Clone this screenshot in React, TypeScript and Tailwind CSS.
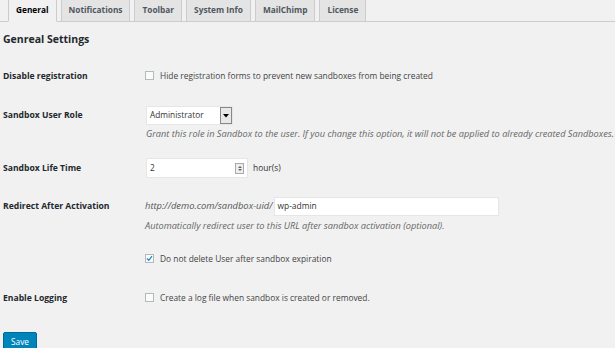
import React from "react";

const font = { fontFamily: '"Open Sans", "Noto Sans", sans-serif' };

function Checkbox({ checked }: { checked?: boolean }) {
  return (
    <span className="inline-flex w-[9px] h-[9px] border border-[#b4b9be] bg-[#fbfbfb] items-center justify-center shrink-0">
      {checked && (
        <svg width="7" height="7" viewBox="0 0 7 7">
          <path d="M1 3.5 L2.8 5.3 L6 1.2" stroke="#1e8cbe" strokeWidth="1.3" fill="none" />
        </svg>
      )}
    </span>
  );
}

export default function App() {
  const tabs = ["General", "Notifications", "Toolbar", "System Info", "MailChimp", "License"];
  return (
    <div className="w-[615px] h-[348px] bg-[#f1f1f1] overflow-hidden text-[#23282d]" style={font}>
      <div className="flex gap-[4px] pl-[8px] h-[22px] border-b border-[#cccccc] items-end">
        {tabs.map((t, i) => (
          <div
            key={t}
            className={
              "h-[22px] px-[7px] flex items-center text-[8.3px] font-bold border border-[#cccccc] " +
              (i === 0 ? "bg-[#f1f1f1] border-b-[#f1f1f1] text-[#000] -mb-px h-[23px]" : "bg-[#e4e4e4] border-b-0 text-[#50575e]")
            }
          >
            {t}
          </div>
        ))}
      </div>
      <div className="pl-[3px]">
        <div className="mt-[10px] text-[10.5px] font-bold leading-[14px]">Genreal Settings</div>

        <div className="mt-[20px] flex items-center h-[20px]">
          <div className="w-[142px] text-[8.6px] font-bold">Disable registration</div>
          <div className="flex items-center gap-[6px] text-[8.4px] text-[#444]">
            <Checkbox />
            <span>Hide registration forms to prevent new sandboxes from being created</span>
          </div>
        </div>

        <div className="mt-[20px] flex items-center h-[19px]">
          <div className="w-[143px] text-[8.6px] font-bold">Sandbox User Role</div>
          <div className="w-[87px] h-[19px] bg-white border border-[#e6e6e6] flex items-center justify-between text-[8.3px] text-[#333]">
            <span className="pl-[3px]">Administrator</span>
            <span className="w-[12px] h-[17px] border border-[#888] bg-[#e8e8e8] flex items-center justify-center">
              <svg width="6" height="4" viewBox="0 0 6 4"><path d="M0 0 H6 L3 3.5 Z" fill="#000" /></svg>
            </span>
          </div>
        </div>
        <div className="mt-[4px] pl-[143px] text-[9.2px] italic text-[#666] leading-[10px] whitespace-nowrap">
          Grant this role in Sandbox to the user. If you change this option, it will not be applied to already created Sandboxes.
        </div>

        <div className="mt-[19px] flex items-center h-[20px]">
          <div className="w-[143px] text-[8.6px] font-bold">Sandbox Life Time</div>
          <div className="w-[102px] h-[20px] bg-white border border-[#e6e6e6] flex items-center justify-between text-[8.3px] text-[#333]">
            <span className="pl-[3px]">2</span>
            <span className="w-[9px] h-[11px] mr-[3px] border border-[#aaa] bg-[#eee] flex flex-col items-center justify-center gap-[1px]">
              <svg width="4" height="2" viewBox="0 0 4 2"><path d="M0 2 H4 L2 0 Z" fill="#666" /></svg>
              <svg width="4" height="2" viewBox="0 0 4 2"><path d="M0 0 H4 L2 2 Z" fill="#666" /></svg>
            </span>
          </div>
          <span className="ml-[5px] text-[8.4px] text-[#333]">hour(s)</span>
        </div>

        <div className="mt-[19px] flex items-center h-[19px]">
          <div className="w-[142px] text-[8.6px] font-bold">Redirect After Activation</div>
          <span className="text-[9.4px] italic text-[#555]">http://demo.com/sandbox-uid/</span>
          <div className="ml-[1px] w-[225px] h-[19px] bg-white border border-[#e6e6e6] flex items-center text-[8.4px] text-[#333]">
            <span className="pl-[3px]">wp-admin</span>
          </div>
        </div>
        <div className="mt-[5px] pl-[142px] text-[9.2px] italic text-[#666] leading-[10px]">
          Automatically redirect user to this URL after sandbox activation (optional).
        </div>

        <div className="mt-[18px] flex items-center h-[20px]">
          <div className="w-[142px]" />
          <div className="flex items-center gap-[6px] text-[8.4px] text-[#444]">
            <Checkbox checked />
            <span>Do not delete User after sandbox expiration</span>
          </div>
        </div>

        <div className="mt-[19px] flex items-center h-[20px]">
          <div className="w-[142px] text-[8.6px] font-bold">Enable Logging</div>
          <div className="flex items-center gap-[6px] text-[8.4px] text-[#444]">
            <Checkbox />
            <span>Create a log file when sandbox is created or removed.</span>
          </div>
        </div>

        <div className="mt-[19px]">
          <button className="h-[20px] px-[7px] bg-[#0085ba] border border-[#006799] rounded-[2px] text-white text-[8.3px] leading-[10px]">
            Save
          </button>
        </div>
      </div>
    </div>
  );
}
